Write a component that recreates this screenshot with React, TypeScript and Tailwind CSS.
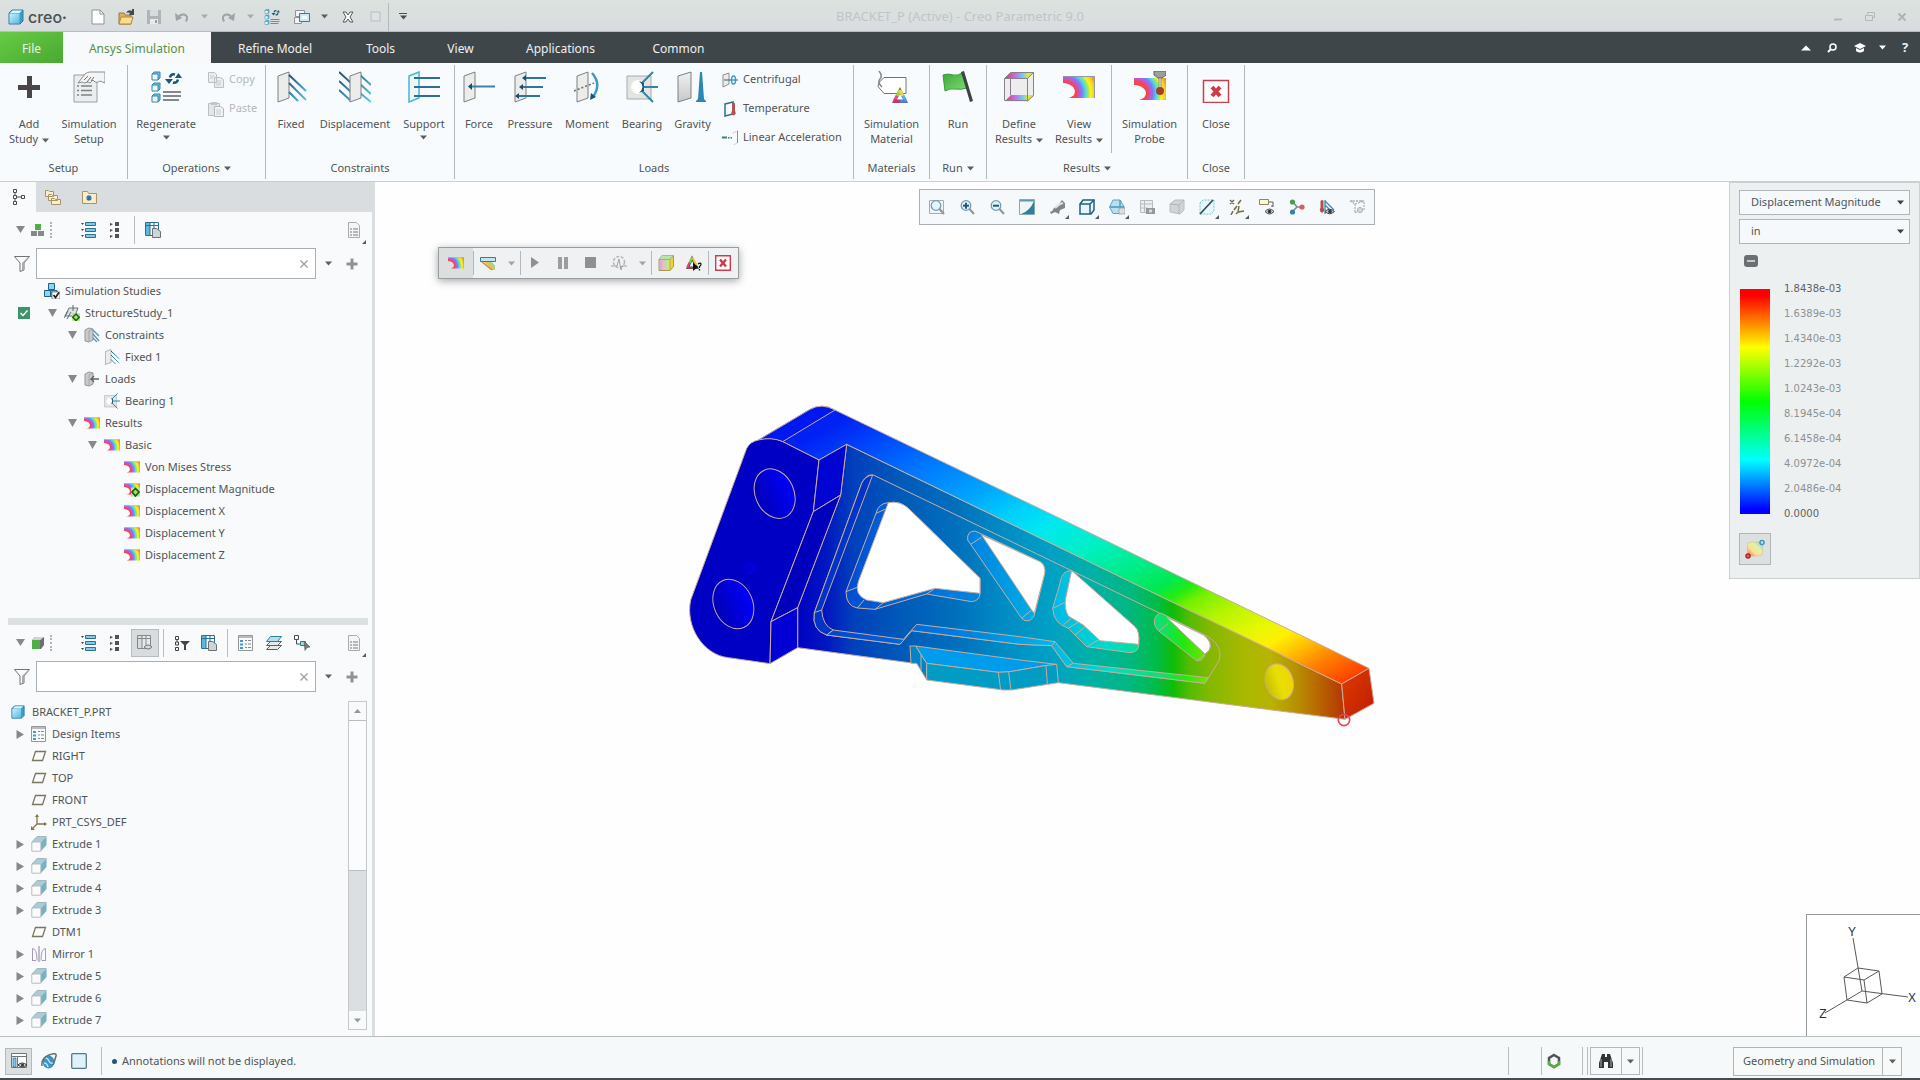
import React from 'react';
import type {ReactNode} from 'react';
import clsx from 'clsx';

/* ---------- icons ---------- */

const Svg = ({w = 16, h = 16, box, children}: {w?: number; h?: number; box?: string; children: ReactNode}) => (
  <svg width={w} height={h} viewBox={box ?? `0 0 ${w} ${h}`} fill="none" className="shrink-0" aria-hidden="true">
    {children}
  </svg>
);

const SharedDefs = () => (
  <svg width="0" height="0" className="absolute" aria-hidden="true">
    <defs>
      <radialGradient id="fringe" gradientUnits="userSpaceOnUse" cx="2" cy="22" r="31">
        <stop offset="0.3" stopColor="#f04848" />
        <stop offset="0.4" stopColor="#ec4868" />
        <stop offset="0.47" stopColor="#c058d8" />
        <stop offset="0.54" stopColor="#8078f0" />
        <stop offset="0.61" stopColor="#58b0f4" />
        <stop offset="0.68" stopColor="#60dcd8" />
        <stop offset="0.75" stopColor="#98e860" />
        <stop offset="0.82" stopColor="#f8f420" />
        <stop offset="0.94" stopColor="#f8d020" />
        <stop offset="1.0" stopColor="#f0a028" />
      </radialGradient>
      <linearGradient id="blueFade" x1="0" y1="0" x2="1" y2="1">
        <stop offset="0" stopColor="#1d4f6e" />
        <stop offset="1" stopColor="#5ec8e8" />
      </linearGradient>
      <linearGradient id="hueBar" x1="0" y1="0" x2="1" y2="0">
        <stop offset="0" stopColor="#e83a50" />
        <stop offset="0.35" stopColor="#c070e8" />
        <stop offset="0.6" stopColor="#70c8f0" />
        <stop offset="0.8" stopColor="#d8ec40" />
        <stop offset="1" stopColor="#f4d820" />
      </linearGradient>
      <linearGradient id="huePastel" x1="0" y1="0" x2="1" y2="0">
        <stop offset="0" stopColor="#c8a0f0" />
        <stop offset="0.4" stopColor="#f4b8c8" />
        <stop offset="0.7" stopColor="#b8e4a0" />
        <stop offset="1" stopColor="#f0e050" />
      </linearGradient>
      <linearGradient id="greyPlate" x1="0" y1="0" x2="0" y2="1">
        <stop offset="0" stopColor="#f0f0f0" />
        <stop offset="1" stopColor="#c8c8c8" />
      </linearGradient>
      <linearGradient id="cubeBlue" x1="0" y1="0" x2="1" y2="1">
        <stop offset="0" stopColor="#c8f0fc" />
        <stop offset="1" stopColor="#58b8e0" />
      </linearGradient>
      <linearGradient id="flag" x1="0" y1="0" x2="1" y2="1">
        <stop offset="0" stopColor="#3fa63a" />
        <stop offset="1" stopColor="#7be070" />
      </linearGradient>
    </defs>
  </svg>
);

const Caret = ({color = '#5b5f62', size = 7}: {color?: string; size?: number}) => (
  <svg width={size} height={5} viewBox="0 0 7 5" className="inline-block shrink-0" aria-hidden="true">
    <path d="M0 0.5h7L3.5 4.5z" fill={color} />
  </svg>
);
const Corner = () => (
  <svg width="4" height="4" viewBox="0 0 4 4" className="absolute right-0 bottom-0" aria-hidden="true">
    <path d="M4 0v4H0z" fill="#55595c" />
  </svg>
);

const AddIcon = () => <Svg w={32} h={32}><path d="M14 5h5v9h8v5h-8v8h-5v-8H5v-5h9z" fill="#4a4647" /></Svg>;
const SetupIcon = () => (
  <Svg w={32} h={32}>
    <path d="M1 4h23v27H1z" fill="#ebedee" stroke="#9a9fa2" />
    <path d="M4 15h2M4 19.500h2M4 24h2M8 15h11M8 19.500h11M8 24h11" stroke="#7d8285" strokeWidth="1.500" />
    <path d="M5 12 12 3q2-2 5-2h15v11l-5-2q-2 2-5 1l-2-2-3 3-2-1-4 1-2-1z" fill="#f4f4f4" stroke="#8b8f92" />
    <path d="m11 9 4-4M14 11l4-5M18 10l3-4" stroke="#6d7174" />
  </Svg>
);
const RegenIcon = ({small}: {small?: boolean}) => (
  <Svg w={small ? 16 : 32} h={small ? 16 : 32} box="0 0 32 32">
    {[1, 12, 23].map((y) => (
      <g key={y} stroke="#2f86a8">
        <path d={`M2 ${y + 2}l2-2h6v6l-2 2z`} fill="#6fc3e0" />
        <path d={`M2 ${y + 2}h6v6H2z`} fill="#f4fcff" />
      </g>
    ))}
    <path d="M13 21h18M13 25h18M13 29h16" stroke="#84888b" strokeWidth="2" />
    <path d="M20 6.500q1-4 5-3M28 8.500q-1 4-5 3" stroke="#1c5878" strokeWidth="2.500" />
    <path d="M15 8h8l-4 5zM25 7h7l-3.500-5z" fill="#1c5878" />
  </Svg>
);
const FixedIcon = ({size = 32}: {size?: number}) => (
  <Svg w={size} h={size} box="0 0 32 32">
    <path d="M3 5 14 1v26L3 31z" fill="#ececea" stroke="#7d8082" />
    <path d="M14 4l17 16M14 12l17 17M14 21l9 9" stroke="url(#blueFade)" strokeWidth="2" />
  </Svg>
);
const DisplacementIcon = () => (
  <Svg w={32} h={32}>
    <path d="M0 1l12 11M0 10l12 11M0 19l12 11M21 4l11 10M21 13l11 10M21 22l11 9" stroke="url(#blueFade)" strokeWidth="2" />
    <path d="M11 5 22 1v26l-11 4z" fill="#ececea" stroke="#7d8082" />
  </Svg>
);
const SupportIcon = () => (
  <Svg w={32} h={32}>
    <path d="M1 5 11 1v26L1 31z" fill="#eef6f8" stroke="#49b4d6" strokeWidth="1.500" />
    <path d="M6 6h26v2H6zM6 15h26v2H6zM6 24h26v2H6z" fill="#2c6f93" />
  </Svg>
);
const ForceIcon = () => (
  <Svg w={32} h={32}>
    <path d="M1 5 12 1v26L1 31z" fill="#ececea" stroke="#7d8082" />
    <path d="M8 14.500h24v2H8z" fill="#3b83a8" /><path d="M5 15.500 9 12v7z" fill="#1c4d6c" />
  </Svg>
);
const PressureIcon = () => (
  <Svg w={32} h={32}>
    <path d="M1 5 12 1v26L1 31z" fill="#ececea" stroke="#7d8082" />
    <path d="M10 6h22v2H10zM8 15h21v2H8zM4 24h22v2H4z" fill="#2f7499" />
    <path d="M8 7l4-3v6zM5 16l4-3v6zM1 25l4-3v6z" fill="#1c4d6c" />
  </Svg>
);
const MomentIcon = () => (
  <Svg w={32} h={32}>
    <path d="M6 5 17 1v26L6 31z" fill="#ececea" stroke="#7d8082" />
    <path d="M3 20 23 12" stroke="#6a6d70" strokeWidth="1.500" strokeDasharray="2 2" />
    <path d="M21 2q10 11 1 24" stroke="#3a9cc4" strokeWidth="2.500" />
    <path d="M19 29l1-7 5 4z" fill="#14567e" />
  </Svg>
);
const BearingIcon = ({size = 32}: {size?: number}) => (
  <Svg w={size} h={size} box="0 0 32 32">
    <path d="M1 5h24v23H1z" fill="#e4e4e2" stroke="#a8abad" />
    <circle cx="12" cy="16" r="7" fill="#fff" />
    <path d="M27 1 16 12M32 16H17M27 31 16 20" stroke="#2f86a8" strokeWidth="2" />
    <path d="M13 10q7 6 0 12l5-2v-8z" fill="#1c5878" />
  </Svg>
);
const GravityIcon = () => (
  <Svg w={32} h={32}>
    <path d="M1 5 14 1v26L1 31z" fill="url(#greyPlate)" stroke="#7d8082" />
    <path d="M23 1h2l2 27 2 2v1H19v-1l2-2z" fill="#2a86b4" />
  </Svg>
);
const CentrifugalIcon = () => (
  <Svg>
    <path d="M1 3 7 1v11l-6 3z" fill="#ececea" stroke="#8b8e90" /><path d="M2 8h14" stroke="#2a5f80" />
    <ellipse cx="11.500" cy="8" rx="2" ry="4" stroke="#3a9cc4" strokeWidth="1.500" />
  </Svg>
);
const TemperatureIcon = () => (
  <Svg>
    <path d="M3 3l8-2v12l-8 2z" fill="#f4fafc" stroke="#2c6f8f" strokeWidth="1.500" />
    <path d="M10 2.500q1.500-2 3 0V10q2 3-1.500 4.500Q8 13 10 10z" fill="#b8504c" />
  </Svg>
);
const LinearIcon = () => (
  <Svg>
    <path d="M0 6.500h5v2H0zM6 7h1.500v1.500H6zM8.500 7H10v1.500H8.500z" fill="#3d7f7c" />
    <path d="M11 3l4.500-2v12L11 15" stroke="#a8abad" strokeDasharray="1 1" /><path d="M15.500 1v12" stroke="#8b8e90" />
  </Svg>
);
const CopyIcon = () => (
  <Svg><path d="M.500.500h6l2 2v8h-8zM6.500 5.500h6l3 2v8h-9z" fill="#eceeee" stroke="#bcbfc1" /><path d="M2 4h4M2 6h3M8 9h5M8 11h5M8 13h5" stroke="#c8cbcd" /></Svg>
);
const PasteIcon = () => (
  <Svg><path d="M.500 2.500h11v12H.500z" fill="#e4e6e6" stroke="#bcbfc1" /><path d="M3 1h6v3H3z" fill="#c4c7c9" /><path d="M6.500 5.500h6l3 2v8h-9z" fill="#f2f4f4" stroke="#b4b7b9" /><path d="M8 9h5M8 11h5M8 13h5" stroke="#c8cbcd" /></Svg>
);
const MaterialIcon = () => (
  <Svg w={32} h={32}>
    <path d="M8 6.500h22v16H8l-6-7 1-4z" fill="#fff" stroke="#707476" />
    <path d="M3 0q4 5 1 8t2 8" stroke="#84888a" strokeWidth="1.500" />
    <path d="M24 16l8 16H16z" fill="#5860a8" />
    <g strokeWidth="3">
      <path d="M24 19l-3 6" stroke="#a8d838" /><path d="M21 25l-3 5.500" stroke="#e05090" />
      <path d="M24 19l3 6" stroke="#f0d838" /><path d="M27 25l3 5.500" stroke="#48b8e8" />
      <path d="M18 30h6" stroke="#e03048" /><path d="M24 30h6" stroke="#6878e0" />
    </g>
    <path d="M24 23l3 5.500h-6z" fill="#fff" />
  </Svg>
);
const FlagIcon = () => (
  <Svg w={32} h={32}>
    <path d="M1 4q5-2 10 0 5 1 9-2l5 15q-6 2-11 1-6-1-11 2z" fill="url(#flag)" stroke="#3f9a3a" />
    <path d="M19 1l3-1 9 30-3 1z" fill="#3d4144" />
  </Svg>
);
const DefineIcon = () => (
  <Svg w={32} h={32}>
    <path d="M8 2h23v24l-7 5H2V7z" fill="#ededed" />
    <path d="M2 7l6-5.500h23L25 7zM2 30l6-6h23l-6 6z" fill="url(#hueBar)" />
    <path d="M1.500 7.500h23v22h-23zM1.500 7.500l6-6h23l-6 6M30.500 1.500v23l-6 5.500M7.500 7v17" stroke="#8a7f90" />
  </Svg>
);
const FringeIcon = ({w = 32, badge}: {w?: number; badge?: boolean}) => (
  <Svg w={w} h={w} box="0 0 32 32">
    <path d="M0 5h32v22H5C15 26 15 13 0 12z" fill="url(#fringe)" />
    <path d="M0 5.500h31.500V27" stroke="#9098a8" />
    {badge && <><path d="M14 13h18v18H14z" fill="#b8ec90" /><path d="M23 15l7 7-7 8-7-8z" fill="#9ae860" stroke="#1e5c18" strokeWidth="3.500" /></>}
  </Svg>
);
const ProbeIcon = () => (
  <Svg w={32} h={32}>
    <path d="M0 7h32v22H5C15 27 15 15 0 14z" fill="url(#fringe)" />
    <path d="M20 0h12v4l-4 3h-4l-4-3z" fill="#9c9fa1" stroke="#606466" /><path d="M25 7h2v10h-2z" fill="#e8e8e8" stroke="#707476" strokeWidth=".7" />
    <circle cx="26" cy="20" r="4" fill="#a83c28" />
  </Svg>
);
const CloseBoxIcon = () => (
  <Svg w={32} h={32}>
    <path d="M3.500 9.500h25v22h-25z" fill="#fff" stroke="#c8404c" strokeWidth="1.500" /><path d="M12 16l8 9M20 16l-8 9" stroke="#cf3a48" strokeWidth="4" />
  </Svg>
);
const CloseSmall = () => <Svg><path d="M.700.700h14.600v14.600H.700z" fill="#fff" stroke="#cf3a48" strokeWidth="1.400" /><path d="M5 4.500l6 7M11 4.500l-6 7" stroke="#cf3a48" strokeWidth="2.500" /></Svg>;

const NewDoc = () => <Svg><path d="M2 1h8l4 4v10H2z" fill="#fff" stroke="#8f9396" /><path d="M10 1v4h4" stroke="#8f9396" /></Svg>;
const OpenFolder = () => (
  <Svg><path d="M1 4h5l1 2h6v9H1z" fill="#e0b060" stroke="#a07830" /><path d="M3 8h12l-2 7H1z" fill="#f8dc90" stroke="#b08838" /><path d="M8 4q2-4 6-2V0h2v6h-5l1-2q-2-1-4 0z" fill="#45494c" /></Svg>
);
const SaveIcon = () => <Svg><path d="M1 1h14v14H1z" fill="#b0b4b6" /><path d="M4 1h8v6H4z" fill="#d8dbdd" /><path d="M4 10h8v5H4z" fill="#e8eaeb" /><path d="M9 11h2v3H9z" fill="#9a9ea0" /></Svg>;
const UndoIcon = ({flip}: {flip?: boolean}) => (
  <Svg><g transform={flip ? 'matrix(-1 0 0 1 16 0)' : undefined}><path d="M4 9q2-4 6-3.500 5 1.500 2 7" stroke="#9ea2a5" strokeWidth="2" /><path d="M1 4l1 8 6-3z" fill="#9ea2a5" /></g></Svg>
);
const WindowsIcon = () => <Svg><path d="M1.500 1.500h9v6h-9zM.500 8.500h7v6h-7z" fill="#f4f4f4" stroke="#8f9396" /><path d="M5.500 4.500h10v8h-10z" fill="#c8ecf8" stroke="#2f7f9f" /><path d="M8 7h5v3H8z" fill="#fff" /></Svg>;
const XOutline = () => <Svg w={12} h={12}><path d="M1 1h3l2 3 2-3h3L8 6l3 5H8L6 8l-2 3H1l3-5z" fill="#fafafa" stroke="#55595c" /></Svg>;
const GreyBox = () => <Svg w={12} h={12}><path d="M1 1h9v9H1z" fill="#dfe2e4" stroke="#b8bcbe" /></Svg>;
const CreoCube = ({size = 16}: {size?: number}) => (
  <Svg w={size} h={size} box="0 0 16 16"><path d="M1 4l3-3h11v11l-3 3H1z" fill="#3a9ec8" stroke="#2a7ea6" /><path d="M1.500 4.500h10v10h-10z" fill="url(#cubeBlue)" /><path d="M2 4l2.500-2.500H14L11.500 4z" fill="#d8f6ff" /></Svg>
);

const TreeTab = () => <Svg w={12}><g stroke="#4a4e51"><path d="M.500.500h3v3h-3zM.500 6.500h3v3h-3zM.500 12.500h3v3h-3zM8.500 6.500h3v3h-3z" /><path d="M4 8h4M2 4v2M2 10v2" /></g></Svg>;
const FoldersTab = () => <Svg><g fill="#fbeec8" stroke="#a89468"><path d="M.500 1.500h3l1 1h4v5h-8zM3.500 5.500h3l1 1h5v5h-9zM6.500 9.500h3l1 1h5v5h-9z" /></g></Svg>;
const FavTab = () => <Svg><path d="M1.500 2.500h5l1 2h8v10h-14z" fill="#fbeec8" stroke="#a89468" /><path d="M8 6v6M5 9h6M6 7l4 4M10 7l-4 4" stroke="#2f6f9f" strokeWidth="1.200" /></Svg>;
const GreenBoxes = () => <Svg w={14} h={14}><path d="M4 1h6v6H4z" fill="#4fae46" /><path d="M0 8h6v5H0zM7 8h6v5H7z" fill="#85898c" /></Svg>;
const GreenCube = () => <Svg w={14} h={14}><path d="M1 4l3-3h9v8l-3 4H1z" fill="#6b6f72" /><path d="M1 4h8v9H1z" fill="#4fae46" /><path d="M1 4l3-3h9L9.500 4z" fill="#d0d4d4" /></Svg>;
const ListWide = () => (
  <Svg>{[0, 6, 12].map((y) => <g key={y}><path d={`M4.500 ${y + .5}h10v3h-10z`} fill="#7ccbe8" stroke="#2c6f8f" /><path d={`M0 ${y + 1}h3l-1.500 2z`} fill="#404447" /></g>)}</Svg>
);
const ListNarrow = () => (
  <Svg>{[0, 6, 12].map((y) => <g key={y} fill="#505457"><path d={`M8 ${y}h4v4H8z`} /><path d={`M3 ${y + 1}l3 1-3 2z`} /></g>)}</Svg>
);
const ColumnsIcon = ({grey}: {grey?: boolean}) => (
  <Svg>
    <path d="M.500.500h13v13H.500z" fill={grey ? '#e8eaea' : '#f4fafc'} stroke={grey ? '#84888b' : '#2c6f8f'} />
    <path d="M1 1h4v12H1z" fill={grey ? '#d8dadb' : '#5cb8dc'} /><path d="M.500 3.500h13M5 1v12M9 1v12" stroke={grey ? '#84888b' : '#2c6f8f'} />
    {grey ? <path d="M7 12q4-4 8 0-4 4-8 0z" fill="#d8dadb" stroke="#777b7e" /> : <path d="M7.500 6.500h4l4 3v6h-8z" fill="#d0d4d6" stroke="#6d7174" />}
  </Svg>
);
const DocList = () => (
  <Svg><path d="M2.500.500h8l3 3v12h-11z" fill="#f4f6f6" stroke="#a8acae" /><path d="M4 7h2M4 10h2M4 13h2M7 7h5M7 10h5M7 13h5" stroke="#a0a4a7" strokeWidth="1.300" /></Svg>
);
const Funnel = () => <Svg><path d="M.500.500h15L10 7v7l-4 1.500V7z" fill="#fafafa" stroke="#707477" /><path d="M8 7l6-6h1l-5 6v7H8z" fill="#a8acae" /></Svg>;
const PlusGrey = () => <Svg w={12} h={12}><path d="M4.500 0.500h3v4H11.500v3H7.500V11.500h-3V7.500H.500v-3h4z" fill="#8f9396" /></Svg>;
const TreeFilter = () => <Svg><path d="M1.500 1.500h3v3h-3zM1.500 7h3v3h-3zM1.500 12.500h3v3h-3zM3 4.500V7" stroke="#404447" /><path d="M6 6h10l-4 4v5h-2v-5z" fill="#404447" /></Svg>;
const DesignItemsIcon = () => (
  <Svg><path d="M.500.500h14v15H.500z" fill="#f8fafa" stroke="#94989b" /><path d="M1 1h13v2H1z" fill="#b8bcbe" /><path d="M2 5h3v2H2zM2 8.500h3v2H2zM2 12h3v2H2z" fill="#3a9cd0" /><path d="M7 5.500h2M7 9h2M7 12.500h2M10 5.500h3M10 9h3M10 12.500h3" stroke="#84888b" /></Svg>
);
const LayersIcon = () => <Svg><g stroke="#5a5e61"><path d="M.500 14.500l4-4h11l-4 4z" fill="#e8eaea" /><path d="M.500 10.500l4-4h11l-4 4z" fill="#e8eaea" /><path d="M.500 6.500l4-5h11l-4 5z" fill="#b4e0f0" stroke="#2c7f9f" /></g></Svg>;
const SelectTree = () => <Svg><path d="M.500.500h4v4h-4zM2.500 5v4h4" stroke="#4a4e51" /><path d="M6.500 6.500h5v4h-5z" fill="#a8dcd8" stroke="#2f7f8f" /><path d="M10 6l6 6-3 .5-2 3z" fill="#6f7f80" stroke="#505457" strokeWidth=".6" /></Svg>;

const StudiesIcon = () => (
  <Svg><g fill="#8cd4f0" stroke="#1f5f88"><path d="M4.500.500h6v6h-6zM.500 7.500h6v6h-6zM7 7.500h6v6H7z" /></g><path d="M8 9h8v7H8z" fill="#fff" stroke="#404447" strokeWidth=".6" /><path d="M9.500 12l2 2.500 3.500-5" stroke="#202427" strokeWidth="1.800" /></Svg>
);
const StudyIcon = () => (
  <Svg><path d="M1 11 5 3h9l-3 8z" fill="#e0e2e2" stroke="#707477" /><path d="M9 0v6M0 13l4-7M3 14l4-7" stroke="#4a7088" /><path d="M8 8h8v8H8z" fill="#b8ec90" /><path d="M12 9l3.300 3.300L12 15.500l-3.300-3.200z" fill="#9ae860" stroke="#1e5c18" strokeWidth="1.500" /></Svg>
);
const BlockIcon = ({load}: {load?: boolean}) => (
  <Svg><path d="M1 3l4-2 4 1v11l-4 2-4-1z" fill="#c8cbcc" stroke="#94989b" /><path d="M5 4v11M5 4l4-2" stroke="#a4a8aa" />
    {load ? <path d="M15 8H7l3-3M7 8l3 3" stroke="#5f6366" strokeWidth="1.300" /> : <path d="M9 3l6 6M9 7l6 7M9 11l4 4" stroke="#5a94b8" strokeWidth="1.300" />}
  </Svg>
);
const PlaneIcon = () => <Svg><path d="M4.500 3.500h10l-3 9h-10z" stroke="#7d7560" strokeWidth="1.300" /></Svg>;
const CsysIcon = () => <Svg><path d="M6 1v9h9M6 10l-5 5" stroke="#85734f" strokeWidth="1.300" /><path d="M4 3l2-3 2 3zM13 8l3 2-3 2zM0 12v4h4z" fill="#85734f" /></Svg>;
const ExtrudeIcon = () => (
  <Svg><path d="M1 6 6 .500h9.500L10 6z" fill="#a8ccd8" /><path d="M10 6l5.500-5.500V9L10 15z" fill="#78b0c4" /><path d="M.800 6h9v9.200h-9z" fill="#fbfbfb" stroke="#b8bcbe" /><path d="M1 6 6 .500h9.500" stroke="#8fa4ac" strokeWidth=".7" /></Svg>
);
const MirrorIcon = () => <Svg><path d="M1.500 14.500V2.500q4.500 0 4.500 12M14.500 14.500V2.500q-4.500 0-4.500 12M1 14.500h4M11 14.500h4" stroke="#a898c0" /><path d="M8 0v16" stroke="#84888b" /></Svg>;

const Magnifier = ({kind}: {kind: 'box' | 'plus' | 'minus'}) => (
  <Svg>
    {kind === 'box' && <path d="M.500 1.500h14v13H.500z" stroke="#a8acae" fill="#f4f6f6" />}
    <circle cx="7" cy="6.500" r="4.800" fill="#e4f4fa" stroke="#6aa0b4" strokeWidth="1.300" /><path d="M10.500 10l4.500 5" stroke="#94989b" strokeWidth="2.200" />
    {kind !== 'box' && <path d="M4 5.700h6v2H4z" fill="#1c5878" />}{kind === 'plus' && <path d="M6 3.700h2v6H6z" fill="#1c5878" />}
  </Svg>
);
const Repaint = () => <Svg><path d="M.500.500h15v15H.500z" fill="#f0f6f8" stroke="#8aa8b4" /><path d="M15 2v13H2Q11 12 15 2z" fill="#2f7f9f" /><path d="M1 1h14v1.500H1z" fill="#5a9ab4" /></Svg>;
const Shade = () => <Svg><path d="M1 13q3-1 4-4l5-4 3-4 3 3v5l-5 2-1 4-4-2-4 2z" fill="#808487" /><path d="M6 9l5-4 3-1" stroke="#e0e2e2" strokeWidth="2" /></Svg>;
const WireCube = () => <Svg><path d="M1 5l3-4h11v10l-3 4H1z" fill="#e8f6fc" stroke="#1f5f80" strokeWidth="1.500" /><path d="M1 5h10v10M11 5l4-4" stroke="#1f5f80" strokeWidth="1.500" /></Svg>;
const ViewsIcon = () => <Svg><path d="M4 1h7l4 6.500v7H4L.500 8z" fill="#b8e0f0" stroke="#5fa4bc" /><path d="M1 8h14M11 1v7" stroke="#4a94b4" strokeWidth="1.300" /><path d="M10 9h6v6h-6z" fill="#dcdedf" stroke="#94989b" strokeWidth=".7" /></Svg>;
const CameraGrid = () => <Svg><path d="M1.500 1.500h12v12h-12zM1.500 5h12M1.500 9h7M5.500 1.500v12" fill="#eceeee" stroke="#b8bbbd" /><path d="M7 9h9v6H7z" fill="#94989b" /><circle cx="11.500" cy="12" r="1.700" fill="#d8dadb" /></Svg>;
const GreyCube = () => <Svg><path d="M1 5l5-4h9v10l-4 4-10-2z" fill="#d0d4d6" stroke="#b8bcbe" /><path d="M1 5l9 1v9M10 6l5-5" stroke="#b0b4b6" /></Svg>;
const ClipIcon = () => <Svg><path d="M1 4l3-3h11v11l-3 3H1z" fill="#e8f8fc" stroke="#7cc4d8" strokeDasharray="2 1" /><path d="M1 15 14 1" stroke="#35505c" strokeWidth="1.800" /></Svg>;
const DatumIcon = () => <Svg><path d="M1 1l4 4M5 1 1 5M12 1l-3 4M8 7l-3 4M4 12l-2 4M10 7l-1 6 6-1M9 13l-2 2" stroke="#756c45" strokeWidth="1.500" /></Svg>;
const AnnoIcon = () => <Svg><path d="M.500.500h9v5h-9z" fill="#fdf8d8" stroke="#8d8860" /><path d="M10 3h4v5M14 7h-2" stroke="#5a5e61" /><path d="M6 12.500q4.500-5 9 0-4.500 5-9 0z" fill="#c8ccce" stroke="#4a4e51" /><circle cx="10.500" cy="12.500" r="1.800" fill="#303437" /></Svg>;
const SpinIcon = () => <Svg><path d="M4 3l4 5 5 0M8 8l-5 5" stroke="#85898c" strokeWidth="1.500" /><circle cx="3.500" cy="3" r="2.600" fill="#4f9a50" /><circle cx="13" cy="8" r="2.600" fill="#d06060" /><circle cx="3.500" cy="13" r="2.600" fill="#3a80a8" /></Svg>;
const SimShow = () => <Svg><path d="M1.500 2q1.500-2 3 0v7q2 3-1.500 5Q-.500 12 1.500 9z" fill="#b0504c" /><path d="M6 1v14M6 2l9 9M6 6l7 7" stroke="#4a84a8" strokeWidth="1.300" /><path d="M6 12.500q4.500-4.500 9.500 0-5 4.500-9.500 0z" fill="#c0c4c6" stroke="#404447" /><circle cx="11" cy="12.500" r="1.800" fill="#303437" /></Svg>;
const GreySim = () => <Svg><path d="M1 2h14v9M1 2l5 3 9-3M6 5v9l4-3M3 1v3M8 1v3M12 1v3" stroke="#b0b4b6" strokeWidth="1.300" strokeDasharray="2 1" /><circle cx="11" cy="11" r="2.500" fill="#d8dadb" stroke="#a8acae" /></Svg>;

const DeformIcon = () => <Svg><path d="M.500 2.500h15v4H.500z" fill="#c4e4f0" stroke="#2a8098" /><path d="M4 7h6l5 5v3h-3z" fill="#f0c040" /><path d="M8 7h4l3 4v3z" fill="#9cd890" /><path d="M2 7l10 8" stroke="#d88040" strokeWidth="1.200" /></Svg>;
const GreyGear = () => <Svg><circle cx="8" cy="7" r="5.500" stroke="#b4b8ba" strokeWidth="1.500" strokeDasharray="3 1.500" /><path d="M0 11h6l2-7 2 11 1-4h5" stroke="#a0a4a7" /></Svg>;
const ColorCube = () => <Svg><path d="M1 4.500l3-4h11.500v11l-3.500 4H1z" fill="#e8d830" stroke="#a89848" /><path d="M1 4.500l3-4h11.500l-3.500 4z" fill="#b8e4a8" /><path d="M1 5h11v10H1z" fill="url(#huePastel)" /><path d="M1 4.500h11v11M12 4.500l3.500-4" stroke="#b09c70" strokeWidth=".8" /></Svg>;
const TriHelp = () => (
  <Svg>
    <path d="M6 .500L13 14H0z" fill="#405060" />
    <path d="M6 2.500 3.500 8" stroke="#70d840" strokeWidth="2" /><path d="M3.500 7.500l-2.300 5" stroke="#e04878" strokeWidth="2" /><path d="M6.500 2.500l4 8" stroke="#e8d030" strokeWidth="2" /><path d="M1 12.800h7" stroke="#e03838" strokeWidth="1.600" />
    <path d="M6.200 6l2.800 5.500H3.700z" fill="#f4f6f6" />
    <path d="M7 7.500l5 4.500-5 4z" fill="#101214" /><path d="M12 9q3-2 3 .5 0 1-1.500 2V13M13.500 14v1.500" stroke="#101214" strokeWidth="1.200" />
  </Svg>
);
const Binoculars = () => <Svg><path d="M4 1h3v3h2V1h3l3 9v5h-5V9H6v6H1v-5z" fill="#303437" /><path d="M3 6v8M13 6v8" stroke="#a8acae" /></Svg>;
const HexIcon = () => <Svg><path d="M8 2 13 5v6l-5 3-5-3V5z" stroke="#505457" strokeWidth="2.500" /><path d="M3 8v3l5 3 5-3V8" stroke="#5aae3f" strokeWidth="2.500" /></Svg>;
const PanelEye = () => <Svg><path d="M.500.500h15v14H.500z" fill="#fafcfc" stroke="#707477" /><path d="M1 3.500h14M6.500 3v11" stroke="#707477" /><path d="M2 5h3v9H2z" fill="#7cc8e8" stroke="#2c6f8f" strokeWidth=".7" /><path d="M7 12q4-4 9 0-4.500 4-9 0z" fill="#c8ccce" stroke="#303437" /><circle cx="11.500" cy="12" r="1.500" fill="#303437" /></Svg>;
const Globe = () => <Svg><ellipse cx="7.500" cy="9" rx="6" ry="6.500" fill="#3a94c8" /><path d="M4 5q3 0 4 3t4 2M3 10q3 0 4 4" stroke="#b8e4f4" strokeWidth="1.500" /><path d="M1 13Q0 5 8 2t7 1-3 9" stroke="#607078" strokeWidth="1.500" /></Svg>;
const WindowBox = () => <Svg><rect x=".7" y=".7" width="14.600" height="14.600" rx="1" fill="#dff2fa" stroke="#5a7888" strokeWidth="1.300" /></Svg>;
const MinMaxIcon = () => (
  <Svg w={20} h={20}>
    <defs><linearGradient id="minmax" x1="0" y1="1" x2="1" y2="0"><stop offset="0" stopColor="#e86850" /><stop offset=".35" stopColor="#f8e098" /><stop offset=".65" stopColor="#e8f0a0" /><stop offset="1" stopColor="#78c8f0" /></linearGradient></defs>
    <rect x="2.500" y="3" width="15" height="14" rx="3.500" fill="url(#minmax)" stroke="#c8b890" strokeWidth=".5" />
    <circle cx="17" cy="3.500" r="2" fill="#c8e8f4" stroke="#3a94c8" strokeWidth="1.500" /><circle cx="3" cy="17" r="2" fill="#c87060" stroke="#b82020" strokeWidth="1.500" />
  </Svg>
);

/* ---------- title bar and tabs ---------- */

function TitleBar() {
  const btn = 'flex h-6 items-center justify-center';
  return (
    <header className="grid h-8 grid-cols-[1fr_auto_1fr] items-center border-b border-[#b9bfc1] bg-gradient-to-b from-[#dce2de] to-[#d8dce0] pt-0.5">
      <div className="flex items-center">
        <div className="flex w-[84px] items-center gap-1 pl-2">
          <CreoCube />
          <span className="font-['Inter',sans-serif] text-[16px] leading-5 font-medium text-[#4b5053]">creo<span className="align-top text-[8px]">•</span></span>
        </div>
        <button aria-label="New" className={clsx(btn, 'w-7')}><NewDoc /></button>
        <button aria-label="Open" className={clsx(btn, 'w-7')}><OpenFolder /></button>
        <button aria-label="Save" className={clsx(btn, 'w-7')}><SaveIcon /></button>
        <button aria-label="Undo" className={clsx(btn, 'w-7')}><UndoIcon /></button>
        <button aria-label="Undo list" className={clsx(btn, 'w-4')}><Caret color="#a8acae" /></button>
        <button aria-label="Redo" className={clsx(btn, 'w-8')}><UndoIcon flip /></button>
        <button aria-label="Redo list" className={clsx(btn, 'w-3')}><Caret color="#a8acae" /></button>
        <button aria-label="Regenerate model" className={clsx(btn, 'w-8')}><RegenIcon small /></button>
        <button aria-label="Windows" className={clsx(btn, 'w-7')}><WindowsIcon /></button>
        <button aria-label="Window list" className={clsx(btn, 'w-4')}><Caret /></button>
        <button aria-label="Close window" className={clsx(btn, 'w-8')}><XOutline /></button>
        <button aria-label="Stop" className={clsx(btn, 'w-6')}><GreyBox /></button>
        <div className="h-7 w-px bg-[#b4b9bb]" />
        <button aria-label="Customize" className={clsx(btn, 'w-7 flex-col gap-px')}><span className="h-px w-2 bg-[#4b4f52]" /><Caret color="#4b4f52" /></button>
      </div>
      <h1 className="text-[13px] text-[#c0c5c7]">BRACKET_P (Active) - Creo Parametric 9.0</h1>
      <div className="flex justify-end pr-0.5">
        <button aria-label="Minimize" className={clsx(btn, 'w-8')}><Svg w={10} h={10}><path d="M1 7.500h8" stroke="#b4b9bb" strokeWidth="2" /></Svg></button>
        <button aria-label="Restore" className={clsx(btn, 'w-8')}><Svg w={12} h={12}><path d="M3.500 3.500v-2h7v5h-2M1.500 4.500h7v5h-7z" stroke="#b4b9bb" /></Svg></button>
        <button aria-label="Close" className={clsx(btn, 'w-8')}><Svg w={10} h={10}><path d="M1.500 1.500l7 7M8.500 1.500l-7 7" stroke="#aeb3b5" strokeWidth="2" /></Svg></button>
      </div>
    </header>
  );
}

function TabBar() {
  return (
    <nav className="flex h-[31px] items-stretch bg-[#3f464a] text-[12px] text-[#eef0f0]">
      <button className="w-[63px] bg-gradient-to-br from-[#66cc44] to-[#4aa832] pt-0.5">File</button>
      <button className="w-[148px] bg-[#f7f9fb] pt-0.5 text-[#5b9048]">Ansys Simulation</button>
      <button className="w-[128px] pt-0.5">Refine Model</button>
      <button className="w-[83px] pt-0.5">Tools</button>
      <button className="w-[77px] pt-0.5">View</button>
      <button className="w-[123px] pt-0.5">Applications</button>
      <button className="w-[113px] pt-0.5">Common</button>
      <div className="ml-auto flex items-center">
        <button aria-label="Collapse ribbon" className="flex w-6 justify-center"><Svg w={10} h={6}><path d="M0 5.500 5 .500l5 5z" fill="#fff" /></Svg></button>
        <button aria-label="Search" className="flex w-7 justify-center"><Svg w={10} h={10}><circle cx="6" cy="4" r="3" stroke="#fff" strokeWidth="1.500" /><path d="M4 6 1 9" stroke="#fff" strokeWidth="2" /></Svg></button>
        <button aria-label="Learning" className="flex w-7 justify-center"><Svg w={12} h={10}><path d="M0 3l6-3 6 3-6 3zM2 5l4 2 4-2v3q-4 3-8 0z" fill="#fff" /></Svg></button>
        <button aria-label="Learning list" className="flex w-4 justify-center"><Caret color="#fff" /></button>
        <button aria-label="Help" className="w-[30px] text-[13px] font-bold">?</button>
      </div>
    </nav>
  );
}

/* ---------- ribbon ---------- */

function BigButton({icon, lines, w, caret}: {icon: ReactNode; lines: string[]; w: string; caret?: 'inline' | 'below'}) {
  return (
    <button className={clsx('flex h-full shrink-0 flex-col items-center pt-1.5', w)}>
      {icon}
      <span className="mt-[13px] block leading-[15px]">
        {lines.map((l, i) => (
          <span key={l} className="block whitespace-nowrap">
            {l}
            {caret === 'inline' && i === lines.length - 1 && <span className="ml-1 inline-flex align-middle"><Caret /></span>}
          </span>
        ))}
        {caret === 'below' && <span className="flex h-3 items-center justify-center"><Caret /></span>}
      </span>
    </button>
  );
}

function SmallButton({icon, label, muted}: {icon: ReactNode; label: string; muted?: boolean}) {
  return (
    <button className={clsx('flex h-[29px] items-center gap-[5px] whitespace-nowrap', muted && 'text-[#b4b8ba]')}>
      {icon}
      {label}
    </button>
  );
}

function Group({label, w, caret, children}: {label: string; w: string; caret?: boolean; children: ReactNode}) {
  return (
    <section className={clsx('flex h-[114px] shrink-0 flex-col border-r border-[#b3b8ba]', w)}>
      <div className="flex h-[88px]">{children}</div>
      <div className="flex h-[26px] items-center justify-center gap-1 pt-1">
        {label}
        {caret && <Caret />}
      </div>
    </section>
  );
}

function Ribbon() {
  return (
    <div className="flex h-[119px] items-center border-b border-[#c9cecf] bg-[#f8fbfd]">
      <Group label="Setup" w="w-[128px]">
        <BigButton icon={<AddIcon />} lines={['Add', 'Study']} w="w-[58px]" caret="inline" />
        <BigButton icon={<SetupIcon />} lines={['Simulation', 'Setup']} w="w-[62px]" />
      </Group>
      <Group label="Operations" w="w-[138px]" caret>
        <BigButton icon={<RegenIcon />} lines={['Regenerate']} w="w-[76px]" caret="below" />
        <div className="pl-1">
          <SmallButton icon={<CopyIcon />} label="Copy" muted />
          <SmallButton icon={<PasteIcon />} label="Paste" muted />
        </div>
      </Group>
      <Group label="Constraints" w="w-[189px]">
        <BigButton icon={<FixedIcon />} lines={['Fixed']} w="w-[50px]" />
        <BigButton icon={<DisplacementIcon />} lines={['Displacement']} w="w-[78px]" />
        <BigButton icon={<SupportIcon />} lines={['Support']} w="w-[60px]" caret="below" />
      </Group>
      <Group label="Loads" w="w-[399px]">
        <BigButton icon={<ForceIcon />} lines={['Force']} w="w-[48px]" />
        <BigButton icon={<PressureIcon />} lines={['Pressure']} w="w-[54px]" />
        <BigButton icon={<MomentIcon />} lines={['Moment']} w="w-[60px]" />
        <BigButton icon={<BearingIcon />} lines={['Bearing']} w="w-[50px]" />
        <BigButton icon={<GravityIcon />} lines={['Gravity']} w="w-[51px]" />
        <div className="pl-1">
          <SmallButton icon={<CentrifugalIcon />} label="Centrifugal" />
          <SmallButton icon={<TemperatureIcon />} label="Temperature" />
          <SmallButton icon={<LinearIcon />} label="Linear Acceleration" />
        </div>
      </Group>
      <Group label="Materials" w="w-[76px]">
        <BigButton icon={<MaterialIcon />} lines={['Simulation', 'Material']} w="w-full" />
      </Group>
      <Group label="Run" w="w-[57px]" caret>
        <BigButton icon={<FlagIcon />} lines={['Run']} w="w-full" />
      </Group>
      <Group label="Results" w="w-[201px]" caret>
        <BigButton icon={<DefineIcon />} lines={['Define', 'Results']} w="w-[64px]" caret="inline" />
        <BigButton icon={<FringeIcon />} lines={['View', 'Results']} w="w-[56px]" caret="inline" />
        <div className="ml-1 w-px bg-[#b3b8ba]" />
        <BigButton icon={<ProbeIcon />} lines={['Simulation', 'Probe']} w="w-[75px]" />
      </Group>
      <Group label="Close" w="w-[57px]">
        <BigButton icon={<CloseBoxIcon />} lines={['Close']} w="w-full" />
      </Group>
    </div>
  );
}

/* ---------- left panel ---------- */

const ToolBtn = ({icon, label, w = 'w-7', active, corner}: {icon: ReactNode; label: string; w?: string; active?: boolean; corner?: boolean}) => (
  <button aria-label={label} className={clsx('relative flex h-7 shrink-0 items-center justify-center', w, active && 'border border-[#b8bcbe] bg-[#d9dcde]')}>
    {icon}
    {corner && <Corner />}
  </button>
);

const Sep = () => <div className="h-7 w-px shrink-0 bg-[#b8bdbf]" />;

function TreeToolbarStart({icon}: {icon: ReactNode}) {
  return (
    <>
      <button aria-label="Tree menu" className="flex w-[34px] shrink-0 items-center gap-1.5">
        <Svg w={9} h={8}><path d="M0 0h9L4.500 7z" fill="#85898c" /></Svg>
        {icon}
      </button>
      <span className="mr-[19px] h-4 border-l-2 border-dotted border-[#b0b4b6] pl-1" />
      <ToolBtn icon={<ListWide />} label="Expand all" />
      <ToolBtn icon={<ListNarrow />} label="Collapse all" w="w-6" />
    </>
  );
}

function FilterRow({label}: {label: string}) {
  return (
    <div className="flex items-center pl-3.5">
      <Funnel />
      <div className="relative ml-1.5 h-[31px] w-[280px]">
        <input aria-label={label} className="h-full w-full border border-[#a9afb2] bg-white pr-6 pl-2 outline-none" />
        <button aria-label="Clear filter" className="absolute top-0 right-0 flex h-full w-6 items-center justify-center"><Svg w={8} h={8}><path d="M.500.500l7 7M7.500.500l-7 7" stroke="#9a9ea0" strokeWidth="1.300" /></Svg></button>
      </div>
      <button aria-label="Filter history" className="flex w-6 justify-center"><Caret /></button>
      <button aria-label="Add filter" className="flex w-6 justify-center"><PlusGrey /></button>
    </div>
  );
}

type Row = {label: string; icon: ReactNode; indent: string; open?: boolean; checked?: boolean; closed?: boolean};

const studyRows: Row[] = [
  {label: 'Simulation Studies', icon: <StudiesIcon />, indent: 'pl-[24px]'},
  {label: 'StructureStudy_1', icon: <StudyIcon />, indent: 'pl-[44px]', open: true, checked: true},
  {label: 'Constraints', icon: <BlockIcon />, indent: 'pl-[64px]', open: true},
  {label: 'Fixed 1', icon: <FixedIcon size={16} />, indent: 'pl-[84px]'},
  {label: 'Loads', icon: <BlockIcon load />, indent: 'pl-[64px]', open: true},
  {label: 'Bearing 1', icon: <BearingIcon size={16} />, indent: 'pl-[84px]'},
  {label: 'Results', icon: <FringeIcon w={16} />, indent: 'pl-[64px]', open: true},
  {label: 'Basic', icon: <FringeIcon w={16} />, indent: 'pl-[84px]', open: true},
  {label: 'Von Mises Stress', icon: <FringeIcon w={16} />, indent: 'pl-[104px]'},
  {label: 'Displacement Magnitude', icon: <FringeIcon w={16} badge />, indent: 'pl-[104px]'},
  {label: 'Displacement X', icon: <FringeIcon w={16} />, indent: 'pl-[104px]'},
  {label: 'Displacement Y', icon: <FringeIcon w={16} />, indent: 'pl-[104px]'},
  {label: 'Displacement Z', icon: <FringeIcon w={16} />, indent: 'pl-[104px]'},
];

const extrude = (n: number): Row => ({label: `Extrude ${n}`, icon: <ExtrudeIcon />, indent: 'pl-[11px]', closed: true});
const plane = (label: string): Row => ({label, icon: <PlaneIcon />, indent: 'pl-[11px]'});

const modelRows: Row[] = [
  {label: 'BRACKET_P.PRT', icon: <CreoCube size={14} />, indent: 'pl-[11px]'},
  {label: 'Design Items', icon: <DesignItemsIcon />, indent: 'pl-[11px]', closed: true},
  plane('RIGHT'),
  plane('TOP'),
  plane('FRONT'),
  {label: 'PRT_CSYS_DEF', icon: <CsysIcon />, indent: 'pl-[11px]'},
  extrude(1),
  extrude(2),
  extrude(4),
  extrude(3),
  plane('DTM1'),
  {label: 'Mirror 1', icon: <MirrorIcon />, indent: 'pl-[11px]', closed: true},
  extrude(5),
  extrude(6),
  extrude(7),
];

function TreeRow({row, root}: {row: Row; root?: boolean}) {
  return (
    <li className={clsx('relative flex h-[22px] items-center', row.indent)}>
      {row.checked && (
        <span className="absolute top-[5px] left-[18px] flex size-3">
          <input type="checkbox" defaultChecked aria-label={row.label} className="size-3 appearance-none bg-[#3c9468]" />
          <svg viewBox="0 0 12 12" className="pointer-events-none absolute inset-0 size-3" aria-hidden="true"><path d="M2.500 6l2.500 2.500 4.500-5" fill="none" stroke="#fff" strokeWidth="1.500" /></svg>
        </span>
      )}
      {!root && (
        <span className="flex w-5 shrink-0 pl-1">
          {row.open && <Svg w={9} h={8}><path d="M0 0h9L4.500 8z" fill="#85898c" /></Svg>}
          {row.closed && <Svg w={9} h={9}><path d="M1.500 0v9L9 4.500z" fill="#85898c" /></Svg>}
        </span>
      )}
      {row.icon}
      <span className={clsx('whitespace-nowrap', root ? 'ml-[7px]' : 'ml-[5px]')}>{row.label}</span>
    </li>
  );
}

function LeftPanel() {
  return (
    <aside className="flex w-[375px] shrink-0 flex-col border-r-[3px] border-[#d9dedf] bg-[#f8fafb]">
      <div className="flex h-[30px] shrink-0 bg-[#d9dddf]">
        <button aria-label="Model tree" className="flex w-9 items-center justify-center bg-[#f8fafb] pl-0.5"><TreeTab /></button>
        <button aria-label="Folder browser" className="flex w-[34px] items-center justify-center"><FoldersTab /></button>
        <button aria-label="Favorites" className="flex w-[38px] items-center justify-center"><FavTab /></button>
      </div>
      <div className="flex h-9 shrink-0 items-center pr-1.5 pl-4">
        <TreeToolbarStart icon={<GreenBoxes />} />
        <div className="mr-1 ml-[7px]"><Sep /></div>
        <ToolBtn icon={<ColumnsIcon />} label="Tree columns" />
        <div className="ml-auto"><ToolBtn icon={<DocList />} label="Tree settings" w="w-6" corner /></div>
      </div>
      <FilterRow label="Filter studies" />
      <ul className="h-[339px] shrink-0 pt-px">
        {studyRows.map((r) => <TreeRow key={r.label} row={r} />)}
      </ul>
      <div className="mr-1 ml-2 h-[7px] shrink-0 bg-[#dbe0e0]" />
      <div className="flex h-9 shrink-0 items-center pr-1.5 pl-4">
        <TreeToolbarStart icon={<GreenCube />} />
        <div className="mx-1 flex"><ToolBtn icon={<ColumnsIcon grey />} label="Show columns" active /></div>
        <Sep />
        <div className="ml-1 flex"><ToolBtn icon={<TreeFilter />} label="Tree filters" w="w-[27px]" /><ToolBtn icon={<ColumnsIcon />} label="Columns" /></div>
        <div className="mx-1"><Sep /></div>
        <ToolBtn icon={<DesignItemsIcon />} label="Design items" />
        <ToolBtn icon={<LayersIcon />} label="Layers" />
        <ToolBtn icon={<SelectTree />} label="Detail tree" />
        <div className="ml-auto"><ToolBtn icon={<DocList />} label="Model tree settings" w="w-6" corner /></div>
      </div>
      <FilterRow label="Filter model" />
      <div className="mt-[9px] flex min-h-0 flex-1 overflow-hidden">
        <ul className="flex-1">
          {modelRows.map((r, i) => <TreeRow key={r.label} row={r} root={i === 0} />)}
        </ul>
        <div className="mr-[5px] mb-1.5 flex w-[19px] flex-col border border-[#c4c9cb] bg-[#dbdfe1]">
          <button aria-label="Scroll up" className="flex h-[18px] items-center justify-center bg-[#f8fafb]"><Svg w={7} h={4}><path d="M0 4h7L3.500 0z" fill="#94989a" /></Svg></button>
          <div className="h-[151px] border-y border-[#b8bdbf] bg-[#fbfcfd]" />
          <button aria-label="Scroll down" className="mt-auto flex h-[18px] items-center justify-center bg-[#f8fafb]"><Caret color="#94989a" /></button>
        </div>
      </div>
    </aside>
  );
}

/* ---------- viewport ---------- */

const webStops: [number, string][] = [
  [383, '#0000c4'], [470, '#0018c0'], [550, '#0040bc'], [680, '#0058b8'], [860, '#0070bc'], [1000, '#008cc4'], [1140, '#00a0c4'],
  [1260, '#00b0a8'], [1380, '#00b880'], [1460, '#00bc48'], [1510, '#10bc08'], [1560, '#54bc00'], [1620, '#84b800'], [1720, '#a8b800'],
  [1800, '#b8b400'], [1880, '#b89000'], [1950, '#b86400'], [2025, '#b43400'],
];
const topStops: [number, string][] = [
  [447, '#0020f4'], [560, '#0044fc'], [720, '#0078ff'], [880, '#00a4ff'], [1000, '#00d0fc'], [1090, '#00e8f0'], [1220, '#00f0c4'],
  [1350, '#00ec88'], [1450, '#00e850'], [1500, '#28ec10'], [1540, '#74f000'], [1620, '#b4f400'], [1720, '#e4f800'], [1790, '#fff000'],
  [1860, '#ffb800'], [1930, '#ff7c00'], [2015, '#ff4400'],
];

function Bracket() {
  const edge = '#c8aca0';
  return (
    <svg width="720" height="350" viewBox="0 0 2160 1050" className="absolute top-[198px] left-[295px]" role="img" aria-label="Displacement result on bracket">
      <defs>
        <linearGradient id="web" gradientUnits="userSpaceOnUse" x1="383" y1="0" x2="2025" y2="0">
          {webStops.map(([x, c]) => <stop key={x} offset={(x - 383) / 1642} stopColor={c} />)}
        </linearGradient>
        <linearGradient id="top" gradientUnits="userSpaceOnUse" x1="447" y1="153" x2="1178" y2="1397">
          {topStops.map(([x, c]) => <stop key={x} offset={(x - 447) / 1568} stopColor={c} />)}
        </linearGradient>
        <linearGradient id="rim" gradientUnits="userSpaceOnUse" x1="433" y1="0" x2="1620" y2="0">
          <stop offset="0" stopColor="#0040d0" />
          <stop offset="0.4" stopColor="#0084e0" />
          <stop offset="0.6" stopColor="#00b8e8" />
          <stop offset="0.75" stopColor="#00dcc8" />
          <stop offset="0.88" stopColor="#10e068" />
          <stop offset="0.93" stopColor="#20e810" />
          <stop offset="1" stopColor="#80e000" />
        </linearGradient>
        <linearGradient id="tip" x1="0" y1="0" x2="1" y2="1">
          <stop offset="0" stopColor="#e03c00" />
          <stop offset="1" stopColor="#bc1c00" />
        </linearGradient>
        <linearGradient id="bore" x1="0" y1="0" x2="1" y2="0">
          <stop offset="0" stopColor="#0000b4" />
          <stop offset="1" stopColor="#0000fc" />
        </linearGradient>
        <linearGradient id="goldBore" x1="0" y1="0" x2="1" y2="0">
          <stop offset="0" stopColor="#c8c000" />
          <stop offset="0.5" stopColor="#e8e000" />
          <stop offset="1" stopColor="#f0d400" />
        </linearGradient>
      </defs>
      <g stroke={edge} strokeWidth="3" strokeLinejoin="round">
        <path d="M530 193 2015 912 2025 1018 1165 908 383 803V683L512 345z" fill="url(#web)" />
        <path d="M265 180 420 88Q455 68 495 90L1180 420 2097 865 2015 912 530 193 447 240 338 185Q310 173 265 180z" fill="url(#top)" />
        <path d="M265 180 420 88Q455 68 495 90L338 185Q310 173 265 180z" fill="#0018f0" />
        <path d="M2015 912 2097 865 2112 970 2025 1018z" fill="url(#tip)" />
        <path d="M265 180Q305 170 338 185L447 240 430 395 303 725 300 851 175 833C100 825 45 740 62 660L230 205Q240 185 265 180z" fill="#0000c4" />
        <path d="M447 240 530 193 512 345 430 395z" fill="#0004d0" />
        <path d="M430 395 512 345 383 683 303 725z" fill="#0000bc" />
        <path d="M303 725 383 683V803L300 851z" fill="#0000d4" />
        <ellipse cx="314" cy="341" rx="58" ry="77" transform="rotate(-24 314 341)" fill="url(#bore)" />
        <ellipse cx="190" cy="672" rx="58" ry="77" transform="rotate(-24 190 672)" fill="url(#bore)" />
        <circle cx="240" cy="565" r="14" fill="none" stroke="#0000ec" strokeWidth="6" />

        {/* pocket */}
        <path d="M575 310Q590 280 610 285L1470 700 1615 770Q1660 800 1648 840L1605 910 1190 860 1145 797 1050 793 725 752 690 793 470 765Q425 750 433 698z" fill="none" />
        <path d="M575 310Q585 288 608 285L455 690Q458 738 490 750L470 765Q425 750 433 698z" fill="#0034c8" />
        <path d="M490 750 700 778 740 733 1050 770 1155 785 1210 850 1615 893 1605 910 1190 860 1145 797 1050 793 725 752 690 793 470 765z" fill="url(#rim)" />
        <path d="M433 698 455 690M1145 797 1155 785M1190 860 1210 850" />

        {/* cut-outs */}
        <path d="M655 368Q625 370 618 400L528 635Q528 678 562 684L615 688 770 642 905 665Q930 662 930 640V595L715 385Q690 362 655 368z" fill="url(#rim)" />
        <path d="M655 368Q690 362 715 385L930 595V640L795 625 640 668 590 660Q552 645 565 605z" fill="#fff" />
        <path d="M528 635 562 622M562 684 582 660M615 688 640 668M770 642 795 625M618 400 645 388" />
        <path d="M893 480Q890 453 915 453L935 462 1110 545Q1127 555 1124 580L1093 705Q1085 725 1065 722L1055 715z" fill="url(#rim)" />
        <path d="M935 465 1110 545Q1127 555 1124 580L1093 700 1085 690z" fill="#fff" />
        <path d="M903 492 935 472M1055 715 1085 690" />
        <path d="M1205 572Q1175 570 1170 610L1148 685Q1150 730 1195 745L1250 800 1380 818Q1410 816 1406 785 1408 755 1395 740z" fill="url(#rim)" />
        <path d="M1205 572 1395 740Q1410 755 1406 793L1290 782 1240 735 1195 708Q1182 685 1187 655z" fill="#fff" />
        <path d="M1148 685 1183 668M1180 735 1205 714M1195 745 1225 726M1215 765 1245 740M1250 800 1285 780" />
        <path d="M1465 752Q1448 735 1455 715 1462 698 1475 700L1600 765Q1630 785 1618 810L1605 822Q1600 845 1580 842z" fill="url(#rim)" />
        <path d="M1490 712 1600 765Q1628 785 1618 810L1605 822z" fill="#fff" />
        <path d="M1468 752 1495 730M1580 842 1605 822" />
        <ellipse cx="1828" cy="905" rx="41" ry="55" transform="rotate(-18 1828 905)" fill="url(#goldBore)" />

        {/* lower pad */}
        <path d="M720 798H737L770 850V900L740 850H723z" fill="#0084c8" />
        <path d="M737 798 1050 840 1160 853 1125 857 1020 875 985 877 770 850z" fill="#009cec" />
        <path d="M770 850 985 877 1020 875 1125 857 1160 853 1165 908 1025 930H1000L770 900z" fill="#009cc4" />
        <path d="M985 877 992 930M1016 876 1023 930M1128 857 1132 912M753 825V870" />
      </g>
      <circle cx="2022" cy="1020" r="17" fill="none" stroke="#e8405c" strokeWidth="5" />
    </svg>
  );
}

const viewTools: {label: string; icon: ReactNode; corner?: boolean}[] = [
  {label: 'Refit', icon: <Magnifier kind="box" />},
  {label: 'Zoom in', icon: <Magnifier kind="plus" />},
  {label: 'Zoom out', icon: <Magnifier kind="minus" />},
  {label: 'Repaint', icon: <Repaint />},
  {label: 'Rendering', icon: <Shade />, corner: true},
  {label: 'Display style', icon: <WireCube />, corner: true},
  {label: 'Saved orientations', icon: <ViewsIcon />, corner: true},
  {label: 'View manager', icon: <CameraGrid />},
  {label: 'Perspective', icon: <GreyCube />},
  {label: 'Section', icon: <ClipIcon />, corner: true},
  {label: 'Datum display', icon: <DatumIcon />, corner: true},
  {label: 'Annotation display', icon: <AnnoIcon />},
  {label: 'Spin center', icon: <SpinIcon />},
  {label: 'Simulation display', icon: <SimShow />},
  {label: 'Simulation query', icon: <GreySim />},
];

function SimulationToolbar() {
  const sep = <div className="h-6 w-px shrink-0 bg-[#b4b8ba]" />;
  return (
    <div className="absolute top-[65px] left-[63px] flex h-8 w-[301px] items-center border border-[#989da0] bg-[#eff1f2] shadow-[0_2px_8px_rgba(0,0,0,0.35)]">
      <button aria-label="Show results" className="flex h-full w-[34px] items-center justify-center bg-[#dcdfe0]"><FringeIcon w={16} /></button>
      {sep}
      <button aria-label="Deformation" className="flex w-7 justify-center"><DeformIcon /></button>
      <button aria-label="Deformation options" className="flex w-[18px] justify-center"><Caret color="#a0a4a6" /></button>
      {sep}
      <button aria-label="Play" className="flex w-7 justify-center"><Svg w={10} h={12}><path d="M1 0v11l8-5.500z" fill="#8d9194" /></Svg></button>
      <button aria-label="Pause" className="flex w-7 justify-center"><Svg w={12} h={12}><path d="M1 0h4v12H1zM7 0h4v12H7z" fill="#9a9ea0" /></Svg></button>
      <button aria-label="Stop animation" className="flex w-7 justify-center"><Svg w={12} h={12}><path d="M0 0h11v11H0z" fill="#8d9194" /></Svg></button>
      <button aria-label="Animation settings" className="flex w-7 justify-center"><GreyGear /></button>
      <button aria-label="Animation list" className="flex w-[18px] justify-center"><Caret color="#a0a4a6" /></button>
      {sep}
      <button aria-label="Legend cube" className="flex w-7 justify-center"><ColorCube /></button>
      <button aria-label="Help on results" className="flex w-7 justify-center"><TriHelp /></button>
      {sep}
      <button aria-label="Close results" className="flex w-7 justify-center"><CloseSmall /></button>
    </div>
  );
}

const legend = ['1.8438e-03', '1.6389e-03', '1.4340e-03', '1.2292e-03', '1.0243e-03', '8.1945e-04', '6.1458e-04', '4.0972e-04', '2.0486e-04', '0.0000'];

function LegendSelect({label, value}: {label: string; value: string}) {
  return (
    <div className="relative flex h-[25px] items-center">
      <select aria-label={label} className="h-full w-full appearance-none border border-[#b0b5b8] bg-[#f6f9fb] pl-[11px] outline-none">
        <option>{value}</option>
      </select>
      <span className="pointer-events-none absolute right-1.5 flex"><Caret color="#3c4043" /></span>
    </div>
  );
}

function Legend() {
  return (
    <aside className="absolute top-0 right-0 flex h-[397px] w-[191px] flex-col border border-[#ccd0d1] bg-[#edf0f1] px-[9px] pt-[7px]">
      <div className="flex flex-col gap-1">
        <LegendSelect label="Result quantity" value="Displacement Magnitude" />
        <LegendSelect label="Units" value="in" />
      </div>
      <button aria-label="Collapse legend" className="mt-[11px] ml-[5px] flex h-3 w-[14px] items-center justify-center rounded-[3px] bg-[#6b6f72]"><span className="h-0.5 w-2 bg-[#c4c8ca]" /></button>
      <div className="mt-[9px] ml-px flex gap-[14px] font-['DejaVu_Sans',sans-serif] text-[10px] text-[#8d9194]">
        <div className="my-[13px] h-[225px] w-[30px] bg-[linear-gradient(to_bottom,#ff0000_0%,#ff0000_3%,#ffff00_26%,#00ff00_50%,#00ffff_76%,#0000ff_98%)]" />
        <ul>
          {legend.map((v, i) => (
            <li key={v} className={clsx('h-[25px] leading-[25px]', (i === 0 || i === legend.length - 1) && 'text-[#5d6164]')}>{v}</li>
          ))}
        </ul>
      </div>
      <button aria-label="Min and max labels" className="mt-1.5 flex size-8 items-center justify-center border border-[#b0b5b8] bg-[#dde0e1]"><MinMaxIcon /></button>
    </aside>
  );
}

function AxisTriad() {
  return (
    <div className="absolute right-0 bottom-0 h-[122px] w-[114px] border-t border-l border-[#94999b] bg-white">
      <svg width="113" height="121" viewBox="0 0 113 121" fill="none" stroke="#55595c" aria-hidden="true">
        <path d="M55 76 46 23M55 76l46 6M55 76 18 98" />
        <path d="M37 62l14-9 21 3-15 9zM37 62l3 23 20 3-3-23M72 56l3 23-15 9" />
        <g fill="#2c3033" stroke="none" fontFamily="Liberation Sans, sans-serif" fontSize="12" textAnchor="middle">
          <text x="45" y="21">Y</text>
          <text x="105" y="87">X</text>
          <text x="16" y="103">Z</text>
        </g>
      </svg>
    </div>
  );
}

function Viewport() {
  return (
    <main className="relative min-w-0 flex-1 overflow-hidden bg-[#fefefe]">
      <div className="absolute top-[7px] left-[544px] flex h-9 border border-[#a9afb2] bg-[#f6f9fb] px-0.5">
        {viewTools.map((t) => (
          <button key={t.label} aria-label={t.label} className="flex w-[30px] items-center justify-center">
            <span className="relative flex h-6 w-6 items-center justify-center">
              {t.icon}
              {t.corner && <Corner />}
            </span>
          </button>
        ))}
      </div>
      <SimulationToolbar />
      <Bracket />
      <Legend />
      <AxisTriad />
    </main>
  );
}

/* ---------- status bar ---------- */

function StatusBar() {
  return (
    <footer className="flex h-11 shrink-0 items-center border-t border-b-2 border-t-[#b9bec0] border-b-[#484c4f] bg-[#f6f9f9] pt-[7px]">
      <button aria-label="Navigator" className="ml-[5px] flex size-[27px] items-center justify-center border border-[#b4b9bb] bg-[#dbdfe0]"><PanelEye /></button>
      <button aria-label="Browser" className="ml-[9px] flex size-4"><Globe /></button>
      <button aria-label="Full screen" className="ml-3.5 flex size-4"><WindowBox /></button>
      <div className="ml-3.5"><Sep /></div>
      <p className="ml-2.5 flex items-center gap-[5px]"><span className="size-[5px] rounded-full bg-[#1f5878]" />Annotations will not be displayed.</p>
      <div className="ml-auto flex items-center">
        <Sep />
        <div className="w-8" />
        <Sep />
        <button aria-label="Regeneration status" className="flex w-10 pl-1"><HexIcon /></button>
        <Sep />
        <div className="w-1" />
        <Sep />
        <div className="mx-0.5 flex h-7 border border-[#b4b9bb]">
          <button aria-label="Find" className="flex w-[31px] items-center justify-center border-r border-[#b4b9bb]"><Binoculars /></button>
          <button aria-label="Find list" className="flex w-[17px] items-center justify-center"><Caret /></button>
        </div>
        <Sep />
        <div className="relative mr-[18px] ml-[90px] h-[29px] w-[169px]">
          <select aria-label="Selection filter" className="h-full w-full appearance-none border border-[#b0b5b8] bg-[#f8fafa] pr-5 pl-[9px] outline-none">
            <option>Geometry and Simulation</option>
          </select>
          <span className="pointer-events-none absolute inset-y-0 right-0 flex w-5 items-center justify-center border-l border-[#b0b5b8]"><Caret /></span>
        </div>
      </div>
    </footer>
  );
}

export default function App() {
  return (
    <div className="flex h-screen min-w-[1280px] flex-col overflow-hidden bg-white font-['Noto_Sans',sans-serif] text-[11px] text-[#505457]">
      <SharedDefs />
      <TitleBar />
      <TabBar />
      <Ribbon />
      <div className="flex min-h-0 flex-1">
        <LeftPanel />
        <Viewport />
      </div>
      <StatusBar />
    </div>
  );
}
